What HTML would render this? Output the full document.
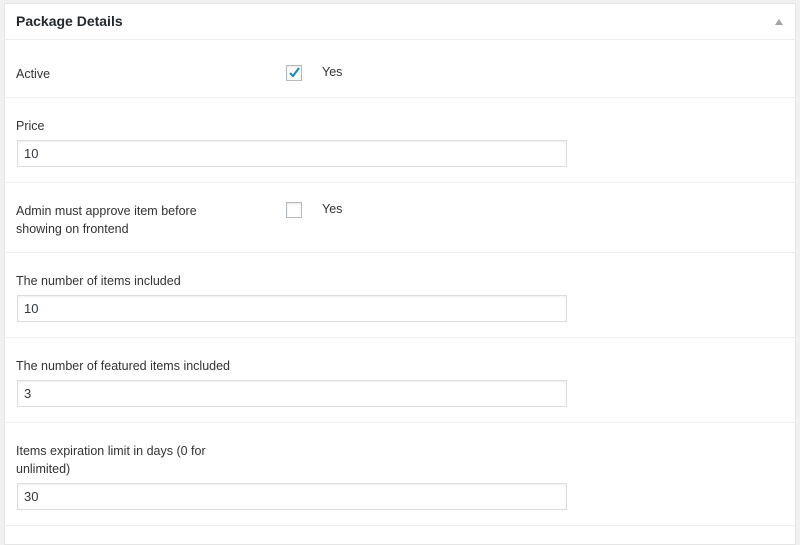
<!DOCTYPE html>
<html><head><style>
body{margin:0;background:#f1f1f1;width:800px;height:537px;overflow:hidden;font-family:"Liberation Sans",sans-serif;font-size:12.5px;color:#333}
.box{position:absolute;left:4px;top:3px;width:790px;height:540px;background:#fff;border:1px solid #e5e5e5}
.hd{position:absolute;left:0;top:0;width:790px;height:35px;border-bottom:1px solid #eee}
.hd span{position:absolute;left:11px;top:9px;font-size:14px;font-weight:bold;color:#23282d}
.tri{position:absolute;right:12px;top:15px;width:0;height:0;border-left:4px solid transparent;border-right:4px solid transparent;border-bottom:6px solid #a0a5aa}
.t{position:absolute;left:16px;line-height:18px}
.sep{position:absolute;left:6px;width:789px;height:1px;background:#eee}
.in{position:absolute;left:17px;width:548px;height:25px;border:1px solid #ddd;box-shadow:inset 0 1px 2px rgba(0,0,0,.07);box-sizing:content-box}
.in span{position:absolute;left:6px;top:5px;font-size:13px;color:#32373c}
.cb{position:absolute;left:286px;width:14px;height:14px;border:1px solid #b4b9be;box-shadow:inset 0 1px 2px rgba(0,0,0,.1);background:#fff}
.yes{position:absolute;left:322px}
</style></head><body>
<div class="box"><div class="hd"><span>Package Details</span><div class="tri"></div></div></div>
<div class="t" style="top:65px">Active</div>
<div class="cb" style="top:65px"><svg width="14" height="14" viewBox="0 0 14 14" style="position:absolute;left:0;top:0"><path d="M3 7 L6 10 L12 2" stroke="#1e8cbe" stroke-width="2.2" fill="none"/></svg></div>
<div class="t yes" style="top:63px">Yes</div>
<div class="sep" style="top:97px"></div>
<div class="t" style="top:117px">Price</div>
<div class="in" style="top:140px"><span>10</span></div>
<div class="sep" style="top:182px"></div>
<div class="t" style="top:202px">Admin must approve item before<br>showing on frontend</div>
<div class="cb" style="top:202px"></div>
<div class="t yes" style="top:200px">Yes</div>
<div class="sep" style="top:252px"></div>
<div class="t" style="top:272px">The number of items included</div>
<div class="in" style="top:295px"><span>10</span></div>
<div class="sep" style="top:337px"></div>
<div class="t" style="top:357px">The number of featured items included</div>
<div class="in" style="top:380px"><span>3</span></div>
<div class="sep" style="top:422px"></div>
<div class="t" style="top:442px">Items expiration limit in days (0 for<br>unlimited)</div>
<div class="in" style="top:483px"><span>30</span></div>
<div class="sep" style="top:525px"></div>
</body></html>
